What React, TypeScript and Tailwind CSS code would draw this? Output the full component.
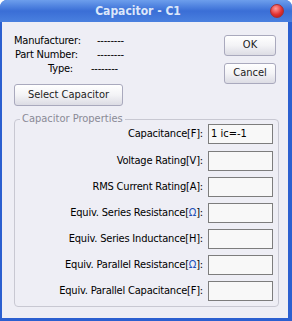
import React from "react";

const rows: { label: React.ReactNode; value?: string }[] = [
  { label: "Capacitance[F]:", value: "1 ic=-1" },
  { label: "Voltage Rating[V]:" },
  { label: "RMS Current Rating[A]:" },
  { label: <>Equiv. Series Resistance[<span className="text-[#1f4fb8]">Ω</span>]:</> },
  { label: "Equiv. Series Inductance[H]:" },
  { label: <>Equiv. Parallel Resistance[<span className="text-[#1f4fb8]">Ω</span>]:</> },
  { label: "Equiv. Parallel Capacitance[F]:" },
];

const btn =
  "flex items-center justify-center rounded-[3px] border border-[#a9a9bd] bg-gradient-to-b from-white via-[#f3f3f6] to-[#dcdce4] text-[#222]";

const App = () => {
  return (
    <div
      className="w-[292px] h-[321px] flex flex-col rounded-t-[7px] bg-[#2b5fd0] text-[11px] tracking-[-0.2px] text-black overflow-hidden"
      style={{ fontFamily: '"DejaVu Sans Condensed", "Liberation Sans", sans-serif' }}
    >
      {/* title bar */}
      <div className="h-[22px] flex items-center bg-gradient-to-b from-[#6d9eec] via-[#3a6ed6] to-[#4a80df]">
        <div className="flex-1 text-center text-[12px] tracking-normal font-bold text-[#dce7fa] pl-[6px]">
          Capacitor - C1
        </div>
        <div className="w-[14px] h-[14px] mr-[8px] rounded-full border border-[#a83030] bg-[radial-gradient(circle_at_40%_30%,#ff9a9a,#e03030_55%,#a81818)]" />
      </div>

      {/* body */}
      <div className="flex-1 ml-[2px] mr-[4px] mb-[3px] bg-[#eeeef5] flex flex-col">
        <div className="flex justify-between pt-[12px] pl-[12px] pr-[12px]">
          <div className="flex flex-col">
            <div className="flex leading-[14px]">
              <span className="w-[64px] text-right">Manufacturer:</span>
              <span className="ml-[19px]">--------</span>
            </div>
            <div className="flex leading-[14px]">
              <span className="w-[64px] text-right">Part Number:</span>
              <span className="ml-[19px]">--------</span>
            </div>
            <div className="flex leading-[14px]">
              <span className="w-[59px] text-right">Type:</span>
              <span className="ml-[18px]">--------</span>
            </div>
            <button className={`${btn} mt-[8px] w-[109px] h-[22px] text-[11px] tracking-normal`}>
              Select Capacitor
            </button>
          </div>
          <div className="flex flex-col gap-[7px] pt-[1px]">
            <button className={`${btn} w-[52px] h-[21px] text-[11px] tracking-normal`}>OK</button>
            <button className={`${btn} w-[52px] h-[21px] text-[11px] tracking-normal`}>Cancel</button>
          </div>
        </div>

        <fieldset className="mt-[8px] ml-[12px] w-[265px] border border-[#c8c8d2] rounded-[4px] pr-[5px] pb-[5px]">
          <legend className="ml-[5px] px-[2px] leading-[10px] text-[11px] tracking-normal text-[#8a8a96]">
            Capacitor Properties
          </legend>
          <div className="flex flex-col gap-[6px]">
            {rows.map((r, i) => (
              <div key={i} className={`flex justify-end items-center gap-[5px] ${i === 0 ? "mb-[1px]" : ""}`}>
                <span>{r.label}</span>
                <div className="w-[65px] h-[20px] border border-[#7d7d7d] bg-[#f8f8f8] px-[2px] flex items-center tracking-normal">
                  {r.value}
                </div>
              </div>
            ))}
          </div>
        </fieldset>
      </div>
    </div>
  );
};

export default App;
